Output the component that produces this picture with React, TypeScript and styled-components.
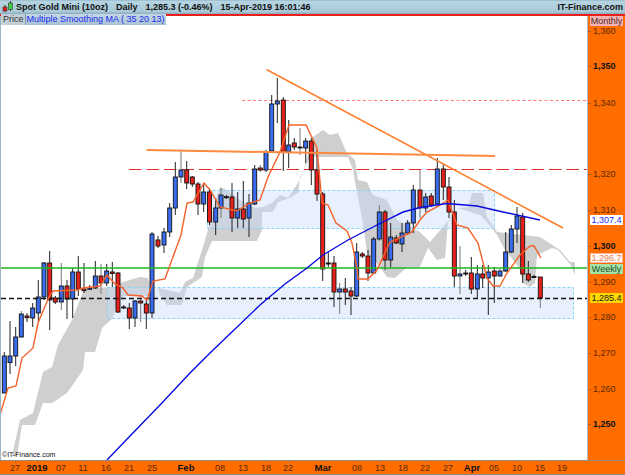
import React from "react";
import styled, { createGlobalStyle } from "styled-components";

type Candle = [number, number, number, number, number, "b" | "r" | "k"];

const candles: Candle[] = [
  [4.3,356,393,352,393,"b"],[10,356,362.6,321,374,"b"],[15.7,337,356,327,366,"b"],[21.3,314,337,311,338,"b"],
  [27,316,317.7,313,322,"r"],[32.7,308,318,303,327,"b"],[38.3,297,313,280,322,"b"],[44,263,297,262,300,"b"],
  [49.7,263,300,251,330,"r"],[55.3,298,302,296,304,"r"],[61.3,286,302,263,310,"b"],[67,286,299,280,319,"r"],
  [72.7,272,299,268,318,"b"],[78.3,272,289,256,296,"r"],[84,289,290.7,263,293,"r"],[89.7,288,289.3,285,290,"b"],
  [95.3,276,288,261,289,"b"],[101,276,283,264,294,"r"],[106.7,271,283,264,286,"b"],[112.3,272,273.5,262,287,"r"],
  [118,273,312,272,313,"r"],[123.7,307,308,305,309,"k"],[129.3,308,318,303,329,"r"],[135,301,318,300,327,"b"],
  [140.7,301,303,297,322,"r"],[146.3,304,313,300,329,"r"],[152,234,313,232,318,"b"],[158,240,246,236,248,"r"],
  [164,232,245,228,253,"b"],[169.7,208,232,203,237,"b"],[175.3,177,208,162,215,"b"],[181,170,177,151,183,"b"],
  [186.7,170,183,161,189,"r"],[192.3,177,184,176,187,"r"],[198,184,204,182,215,"r"],[203.7,192,204,183,212,"b"],
  [209.5,192,222,188,225,"r"],[215.7,208,222,198,235,"b"],[221,195,208,188,218,"b"],[226.3,196.7,197.5,195,199,"k"],
  [232,197,218,183,232,"r"],[237.7,209,218,192,228,"b"],[243.3,209,219,181,228,"r"],[249,203,218,194,237,"b"],
  [254.7,169,204,165,205,"b"],[260.3,168,170,165,172,"r"],[266,152,170,150,172,"b"],[271.7,104,151,95,152,"b"],
  [277.3,101,104,78,123,"b"],[283.3,100,152,97,171,"r"],[288.7,145,152,120,168,"b"],[294.3,143,147,138,150,"r"],
  [300,147,148,128,155,"k"],[305.7,141,148,138,163,"b"],[311.3,141,170,138,185,"r"],[317,170,194,150,201,"r"],
  [322.7,194,269,192,281,"r"],[328.3,263,264,252,267,"k"],[334,263,292,256,307,"r"],[339.7,289,292,283,314,"b"],
  [345.3,289,292,278,305,"r"],[351,291,296,287,315,"r"],[356.7,252,296,243,297,"b"],[362.3,254,256,252,258,"r"],
  [368,256,273,250,281,"r"],[373.7,239,273,237,274,"b"],[379.3,212,239,205,241,"b"],[385,212,260,210,270,"r"],
  [390.7,237,260,223,267,"b"],[396.3,238,243,235,244,"r"],[402,233,244,223,252,"b"],[407.7,223,233,220,235,"b"],
  [413.3,190,223,185,233,"b"],[420,190,208,170,218,"r"],[425.7,197,208,193,212,"b"],[431.3,196,205,193,207,"r"],
  [437.3,169,204,158,205,"b"],[443.3,169,187,165,200,"r"],[449,187,212,177,218,"r"],[454.3,212,276,200,287,"r"],
  [460,274,276,246,294,"b"],[465.7,273,274,270,276,"k"],[471.3,273,289,257,294,"r"],[477.3,274,289,265,298,"b"],
  [482.7,274,278,265,288,"r"],[488.3,272,278,265,315,"b"],[494.3,271,276,267,303,"r"],[500,271,276,269,277,"b"],
  [505.7,252,271,232,272,"b"],[511.3,229,252,225,253,"b"],[517,216,229,207,243,"b"],[522.7,217,274,213,283,"r"],
  [528.3,274,280,261,282,"r"],[534,276.5,277.3,275,278,"k"],[540.3,277,298,277,308,"r"],
];

const thinMa = "0,415 8,388 16,386 22,358 33,348 38,323 49,297 53,291 77,290 83,288 100,286 107,275 115,284 123,288 128,295 142,296 147,300 153,281 165,279 170,265 181,235 187,203 193,202 204,183 210,190 220,207 237,211 250,203 260,200 268,177 280,152 289,125 306,125 317,148 322,203 328,205 336,223 347,231 352,243 357,268 358,279 368,279 377,270 390,242 397,239 412,232 420,220 427,212 437,207 448,200 457,225 468,228 478,243 487,278 493,286 500,286 507,273 520,255 530,246 534,246 541,258";
const blueMa = "107,460 130,436 160,405 190,373 210,353 234,330 260,305 285,284 307,268 323,255 348,240 377,225 403,212 420,207.5 447,203.5 477,206 503,212 540,220";
const cloudLeft = "12,456 20,420 33,413 43,372 52,367 58,345 72,320 83,292 93,288 117,287 120,283 140,277 148,278 152,296 125,296 118,300 113,318 102,328 95,352 85,352 83,370 67,393 52,403 43,403 35,425 22,425 17,456";
const cloudMid = "158,288 180,293 185,282 193,278 203,247 207,233 215,203 220,187 227,190 240,200 255,208 263,207 272,203 280,195 288,198 298,183 303,172 313,137 323,130 330,135 338,133 347,153 355,160 358,180 367,182 373,195 387,200 397,220 403,223 420,232 430,242 453,215 458,208 468,207 472,193 483,193 487,217 497,232 540,237 560,250 570,262 575,262 575,275 570,264 558,250 552,248 537,255 535,283 530,287 523,283 520,270 515,262 505,250 497,235 487,222 480,215 458,208 448,222 445,258 437,260 428,248 420,267 407,267 395,278 387,277 377,263 367,253 363,223 357,193 353,170 348,157 310,157 300,177 298,193 290,198 278,202 273,212 262,212 262,230 257,241 212,241 205,257 202,277 187,287 182,305 167,305 160,295";

const prices = [
  { y: 31, t: "1,360" }, { y: 66, t: "1,350", b: true }, { y: 103, t: "1,340" }, { y: 174, t: "1,320" },
  { y: 210, t: "1,310" }, { y: 246, t: "1,300", b: true }, { y: 282, t: "1,290" }, { y: 317, t: "1,280" },
  { y: 353, t: "1,270" }, { y: 389, t: "1,260" }, { y: 424, t: "1,250", b: true },
];
const dates = [
  { x: 15, t: "27" }, { x: 37, t: "2019", b: true }, { x: 61, t: "07" }, { x: 83, t: "11" }, { x: 106, t: "16" },
  { x: 129, t: "21" }, { x: 152, t: "25" }, { x: 186, t: "Feb", b: true }, { x: 220, t: "08" }, { x: 243, t: "13" },
  { x: 266, t: "18" }, { x: 288, t: "22" }, { x: 323, t: "Mar", b: true }, { x: 357, t: "08" }, { x: 380, t: "13" },
  { x: 403, t: "18" }, { x: 425, t: "22" }, { x: 448, t: "27" }, { x: 472, t: "Apr", b: true }, { x: 494, t: "05" },
  { x: 517, t: "10" }, { x: 540, t: "15" }, { x: 562, t: "19" },
];

const Global = createGlobalStyle`
  html, body { margin: 0; padding: 0; background: #fff; }
  * { box-sizing: border-box; }
`;
const Frame = styled.div`
  width: 625px; height: 475px; display: grid;
  grid-template-rows: 16px 1fr 15px; overflow: hidden; position: relative;
  font-family: "Liberation Sans", Arial, sans-serif;
`;
const TitleBar = styled.header`
  display: flex; align-items: center; gap: 8px; padding: 0 2px 1px;
  background: linear-gradient(#8fb0c2 0, #b6d5e2 8%, #a9c9d8 85%, #88a8ba 100%);
  border-bottom: 2px solid #e8201c;
  font-size: 9px; font-weight: 700; color: #111; white-space: nowrap;
`;
const Logo = styled.svg` width: 11px; height: 12px; flex: none; margin-right: -5px; `;
const Brand = styled.span` margin-left: auto; `;
const Middle = styled.div` display: grid; grid-template-columns: 1fr 37px; min-height: 0; `;
const Plot = styled.div`
  position: relative; border-left: 1px solid #9fb3c0; border-right: 1px solid #a8bccb; background: #fff;
`;
const Chart = styled.svg` display: block; width: 586px; height: 444px; `;
const Legend = styled.div`
  position: absolute; left: 0; top: -2px; height: 11px; display: flex; font-size: 9px; line-height: 10px;
`;
const LegendPrice = styled.span`
  background: #c3cfd8; color: #333; padding: 0 1px 0 2px; border-right: 1px solid #7f96a6;
`;
const LegendMa = styled.span`
  background: linear-gradient(#c5d7e4, #a9c2d3); color: #1a2cf0; padding: 0 1px;
`;
const Watermark = styled.span`
  position: absolute; left: 1px; bottom: 1px; font-size: 7px; line-height: 9px; color: #111;
`;
const PriceAxis = styled.aside` position: relative; background: #ff6c00; `;
const PriceLabel = styled.span<{ $bold?: boolean }>`
  position: absolute; left: 5px; font-size: 9px; line-height: 10px; transform: translateY(-5px);
  color: ${(p) => (p.$bold ? "#111" : "#5a2a00")}; font-weight: ${(p) => (p.$bold ? 700 : 400)};
  &::before { content: ""; position: absolute; left: -5px; top: 5px; width: 3px; height: 1px; background: #a85a20; }
`;
const Tag = styled.span<{ $bg: string; $fg: string; $edge?: string }>`
  position: absolute; left: 2px; width: 33px; height: 10px; font-size: 9px; line-height: 10px; text-align: center;
  background: ${(p) => p.$bg}; color: ${(p) => p.$fg}; outline: ${(p) => (p.$edge ? `1px solid ${p.$edge}` : "none")}; outline-offset: -1px;
`;
const TimeAxis = styled.footer`
  position: relative; background: #ff6c00; border-top: 1px solid #9a8a7c; border-bottom: 1px solid #9a8a7c;
`;
const DateLabel = styled.span<{ $bold?: boolean }>`
  position: absolute; top: 2px; font-size: ${(p) => (p.$bold ? "9.5px" : "9px")}; line-height: 10px; transform: translateX(-50%);
  color: ${(p) => (p.$bold ? "#111" : "#5a2a00")}; font-weight: ${(p) => (p.$bold ? 700 : 400)};
  &::before { content: ""; position: absolute; left: 50%; top: -2px; width: 1px; height: 2px; background: #b07040; }
`;

const tagTop = (y: number) => ({ top: y - 16 });

export default function App() {
  return (
    <Frame>
      <Global />
      <TitleBar>
        <Logo viewBox="0 0 11 12">
          <path d="M3 4v7M8.5 0v10" stroke="#333" strokeWidth="1" />
          <rect x="1" y="6" width="4" height="4" fill="#e8201c" stroke="#333" strokeWidth=".6" />
          <rect x="6.5" y="2" width="4" height="6.5" fill="#3fd04a" stroke="#333" strokeWidth=".6" />
        </Logo>
        <span>Spot Gold Mini (10oz)</span>
        <span>Daily</span>
        <span>1,285.3 (-0.46%)</span>
        <span>15-Apr-2019 16:01:46</span>
        <Brand>IT-Finance.com</Brand>
      </TitleBar>
      <Middle>
        <Plot>
          <Chart viewBox="1 16 586 444">
            <polygon points={cloudLeft} fill="#cfcfcf" />
            <polygon points={cloudMid} fill="#cfcfcf" />
            <rect x="107.5" y="287.5" width="466" height="31" fill="#c8d8fb" fillOpacity=".42" stroke="#88d4f8" strokeDasharray="3 2" />
            <rect x="207.5" y="190.5" width="287" height="38" fill="#c8d8fb" fillOpacity=".42" stroke="#88d4f8" strokeDasharray="3 2" />
            <line x1="242" y1="100.5" x2="588" y2="100.5" stroke="#ff7a7a" strokeWidth="1.2" strokeDasharray="3 2.5" />
            <line x1="129" y1="169.5" x2="588" y2="169.5" stroke="#e03030" strokeDasharray="12.5 5" />
            {candles.map(([x, top, bottom, hi, lo, kind], i) => (
              <g key={i}>
                <line x1={x} x2={x} y1={hi} y2={lo} stroke={i % 7 === 3 ? "#777" : "#222"} strokeWidth="1" />
                <rect
                  x={x - 2}
                  y={top}
                  width="4"
                  height={Math.max(bottom - top, 1)}
                  fill={kind === "b" ? "#3a6cf0" : kind === "r" ? "#e8201c" : "#333"}
                  stroke="#111"
                  strokeWidth=".9"
                />
              </g>
            ))}
            <line x1="1" y1="268" x2="588" y2="268" stroke="#1fb51f" strokeWidth="1.6" />
            <line x1="1" y1="298.5" x2="588" y2="298.5" stroke="#111" strokeWidth="1.6" strokeDasharray="5 3" />
            <polyline points={thinMa} fill="none" stroke="#f4622a" strokeWidth="1.4" />
            <polyline points={blueMa} fill="none" stroke="#0a0ae0" strokeWidth="1.4" />
            <line x1="266.5" y1="69.5" x2="563" y2="228" stroke="#ff7e2c" strokeWidth="1.5" />
            <line x1="146.5" y1="150" x2="495" y2="156" stroke="#ff8a40" strokeWidth="2" />
          </Chart>
          <Legend>
            <LegendPrice>Price</LegendPrice>
            <LegendMa>Multiple Smoothing MA ( 35 20 13)</LegendMa>
          </Legend>
          <Watermark>©IT-Finance.com</Watermark>
        </Plot>
        <PriceAxis>
          {prices.map((p) => (
            <PriceLabel key={p.t} $bold={p.b} style={{ top: p.y - 16 }}>
              {p.t}
            </PriceLabel>
          ))}
          <Tag $bg="#f6b3b3" $fg="#4a2a2a" style={tagTop(16)}>Monthly</Tag>
          <Tag $bg="#ffffff" $fg="#1a2cf0" style={tagTop(215)}>1,307.4</Tag>
          <Tag $bg="#fff8f5" $fg="#e8805c" $edge="#f6b8a0" style={tagTop(253)}>1,296.7</Tag>
          <Tag $bg="#a4e2a8" $fg="#1f4a24" style={tagTop(264)}>Weekly</Tag>
          <Tag $bg="#ffd800" $fg="#222" style={tagTop(293)}>1,285.4</Tag>
        </PriceAxis>
      </Middle>
      <TimeAxis>
        {dates.map((d) => (
          <DateLabel key={d.x} $bold={d.b} style={{ left: d.x }}>
            {d.t}
          </DateLabel>
        ))}
      </TimeAxis>
    </Frame>
  );
}
